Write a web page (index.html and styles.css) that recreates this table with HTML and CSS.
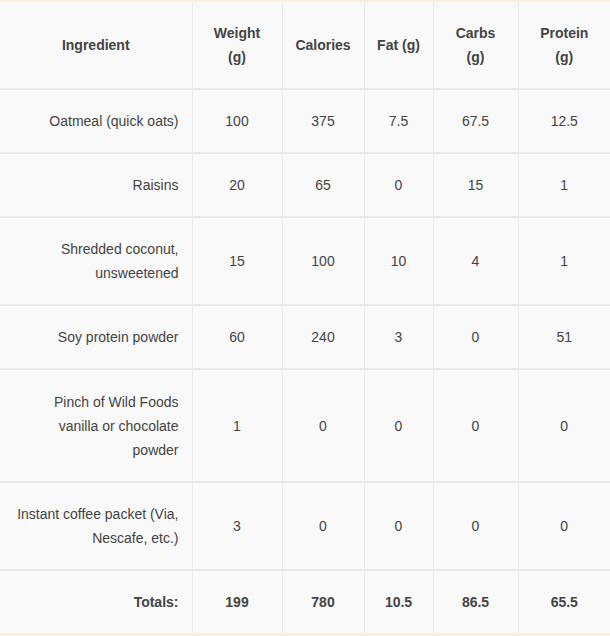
FILE: index.html
```html
<!DOCTYPE html>
<html lang="en">
<head>
<meta charset="utf-8">
<title>Ingredients</title>
<link rel="stylesheet" href="styles.css">
</head>
<body>
<table class="nutrition">
  <colgroup>
    <col class="c-ing"><col class="c-w"><col class="c-cal"><col class="c-fat"><col class="c-carb"><col class="c-pro">
  </colgroup>
  <thead>
    <tr>
      <th class="ing-head">Ingredient</th>
      <th>Weight<br>(g)</th>
      <th>Calories</th>
      <th>Fat (g)</th>
      <th>Carbs<br>(g)</th>
      <th>Protein<br>(g)</th>
    </tr>
  </thead>
  <tbody>
    <tr>
      <td class="ing">Oatmeal (quick oats)</td>
      <td>100</td><td>375</td><td>7.5</td><td>67.5</td><td>12.5</td>
    </tr>
    <tr>
      <td class="ing">Raisins</td>
      <td>20</td><td>65</td><td>0</td><td>15</td><td>1</td>
    </tr>
    <tr>
      <td class="ing">Shredded coconut,<br>unsweetened</td>
      <td>15</td><td>100</td><td>10</td><td>4</td><td>1</td>
    </tr>
    <tr>
      <td class="ing">Soy protein powder</td>
      <td>60</td><td>240</td><td>3</td><td>0</td><td>51</td>
    </tr>
    <tr class="tall">
      <td class="ing">Pinch of Wild Foods<br>vanilla or chocolate<br>powder</td>
      <td>1</td><td>0</td><td>0</td><td>0</td><td>0</td>
    </tr>
    <tr>
      <td class="ing">Instant coffee packet (Via,<br>Nescafe, etc.)</td>
      <td>3</td><td>0</td><td>0</td><td>0</td><td>0</td>
    </tr>
  </tbody>
  <tfoot>
    <tr class="totals">
      <td class="ing">Totals:</td>
      <td>199</td><td>780</td><td>10.5</td><td>86.5</td><td>65.5</td>
    </tr>
  </tfoot>
</table>
</body>
</html>
```
FILE: styles.css
```css
html, body {
  margin: 0;
  padding: 0;
}
body {
  background: #f7f0da;
  padding-top: 2px;
  font-family: "Liberation Sans", Arial, Helvetica, sans-serif;
  font-size: 14px;
  line-height: 24px;
  color: #444444;
}
.nutrition {
  width: 610px;
  table-layout: fixed;
  border-collapse: collapse;
  background: #f9f9f9;
}
.c-ing { width: 192px; }
.c-w { width: 90px; }
.c-cal { width: 82px; }
.c-fat { width: 69px; }
.c-carb { width: 85px; }
.c-pro { width: 92px; }

.nutrition th,
.nutrition td {
  padding: 19px 6px;
  text-align: center;
  vertical-align: middle;
  white-space: nowrap;
  border-left: 1px solid #ebebeb;
  border-right: 1px solid #ebebeb;
  border-bottom: 2px solid #e8e8e8;
}
.nutrition tr > :first-child { border-left: none; }
.nutrition tr > :last-child { border-right: none; }
.nutrition th {
  font-weight: bold;
}
.nutrition td.ing {
  text-align: right;
  padding-right: 13px;
  padding-left: 12px;
}
.nutrition th.ing-head {
  text-align: center;
}
.nutrition .tall td {
  padding-top: 20px;
}
.totals td {
  font-weight: bold;
  border-bottom: none;
}
```
